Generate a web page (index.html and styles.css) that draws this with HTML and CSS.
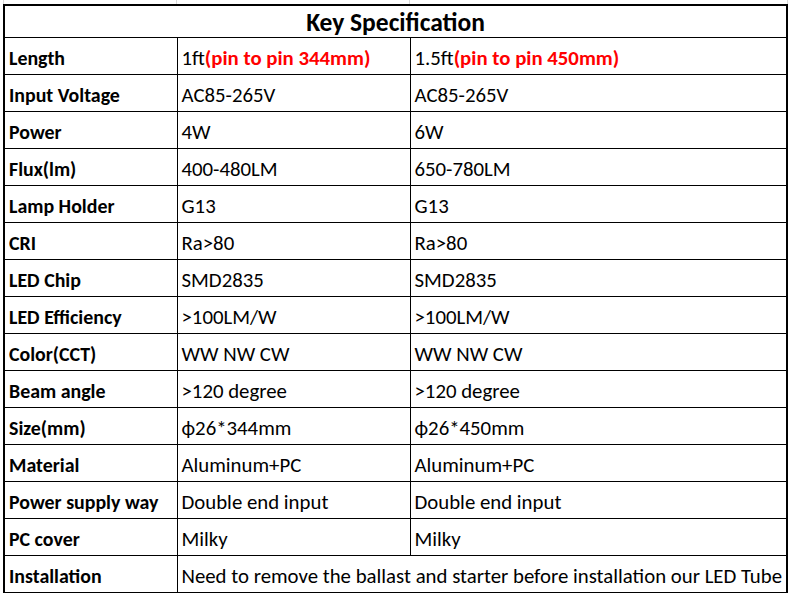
FILE: index.html
```html
<!DOCTYPE html>
<html>
<head>
<meta charset="utf-8">
<link rel="stylesheet" href="styles.css">
</head>
<body>
<div class="sheet">
  <div class="gridtop">
    <div class="g g1"></div>
    <div class="g g2"></div>
    <div class="g g3"></div>
  </div>
  <table class="spec">
    <colgroup>
      <col class="c1"><col class="c2"><col class="c3">
    </colgroup>
    <tr class="head"><th colspan="3">Key Specification</th></tr>
    <tr><td class="lbl">Length</td><td>1ft<b class="red">(pin to pin 344mm)</b></td><td>1.5ft<b class="red">(pin to pin 450mm)</b></td></tr>
    <tr><td class="lbl">Input Voltage</td><td>AC85-265V</td><td>AC85-265V</td></tr>
    <tr><td class="lbl">Power</td><td>4W</td><td>6W</td></tr>
    <tr><td class="lbl">Flux(lm)</td><td>400-480LM</td><td>650-780LM</td></tr>
    <tr><td class="lbl">Lamp Holder</td><td>G13</td><td>G13</td></tr>
    <tr><td class="lbl">CRI</td><td>Ra&gt;80</td><td>Ra&gt;80</td></tr>
    <tr><td class="lbl">LED Chip</td><td>SMD2835</td><td>SMD2835</td></tr>
    <tr><td class="lbl">LED Efficiency</td><td>&gt;100LM/W</td><td>&gt;100LM/W</td></tr>
    <tr><td class="lbl">Color(CCT)</td><td>WW NW CW</td><td>WW NW CW</td></tr>
    <tr><td class="lbl">Beam angle</td><td>&gt;120 degree</td><td>&gt;120 degree</td></tr>
    <tr><td class="lbl">Size(mm)</td><td>ϕ26*344mm</td><td>ϕ26*450mm</td></tr>
    <tr><td class="lbl">Material</td><td>Aluminum+PC</td><td>Aluminum+PC</td></tr>
    <tr><td class="lbl">Power supply way</td><td>Double end input</td><td>Double end input</td></tr>
    <tr><td class="lbl">PC cover</td><td>Milky</td><td>Milky</td></tr>
    <tr><td class="lbl">Installation</td><td colspan="2">Need to remove the ballast and starter before installation our LED Tube</td></tr>
  </table>
</div>
</body>
</html>
```

FILE: styles.css
```css
html, body {
  margin: 0;
  padding: 0;
  background: #ffffff;
}
body {
  font-family: Carlito, "Liberation Sans", Arial, sans-serif;
  color: #000000;
}
.sheet {
  padding-left: 3px;
  width: 786px;
}
.gridtop {
  display: flex;
  height: 4px;
}
.g {
  border-left: 1px solid #d9d9d9;
  box-sizing: border-box;
}
.g1 { width: 173px; }
.g2 { width: 233px; }
.g3 { width: 379px; border-right: 1px solid #d9d9d9; }
.spec {
  border-collapse: collapse;
  table-layout: fixed;
  width: 785px;
  border: 2px solid #000;
}
.c1 { width: 173px; }
.c2 { width: 233px; }
.c3 { width: 377px; }
.spec th, .spec td {
  border: 1px solid #000;
  padding: 5px 4px 0;
  text-align: left;
  white-space: nowrap;
  overflow: hidden;
  font-size: 20.8px;
  font-weight: normal;
  vertical-align: middle;
  line-height: 1.1;
}
.spec tr { height: 37px; }
.spec tr.head { height: 32px; }
.spec th {
  text-align: center;
  font-weight: bold;
  font-size: 25.5px;
  padding: 3px 0 0;
}
.spec td.lbl {
  font-weight: bold;
  font-size: 19.9px;
  padding-top: 6px;
}
.red {
  color: #ff0000;
  font-weight: bold;
}
```
